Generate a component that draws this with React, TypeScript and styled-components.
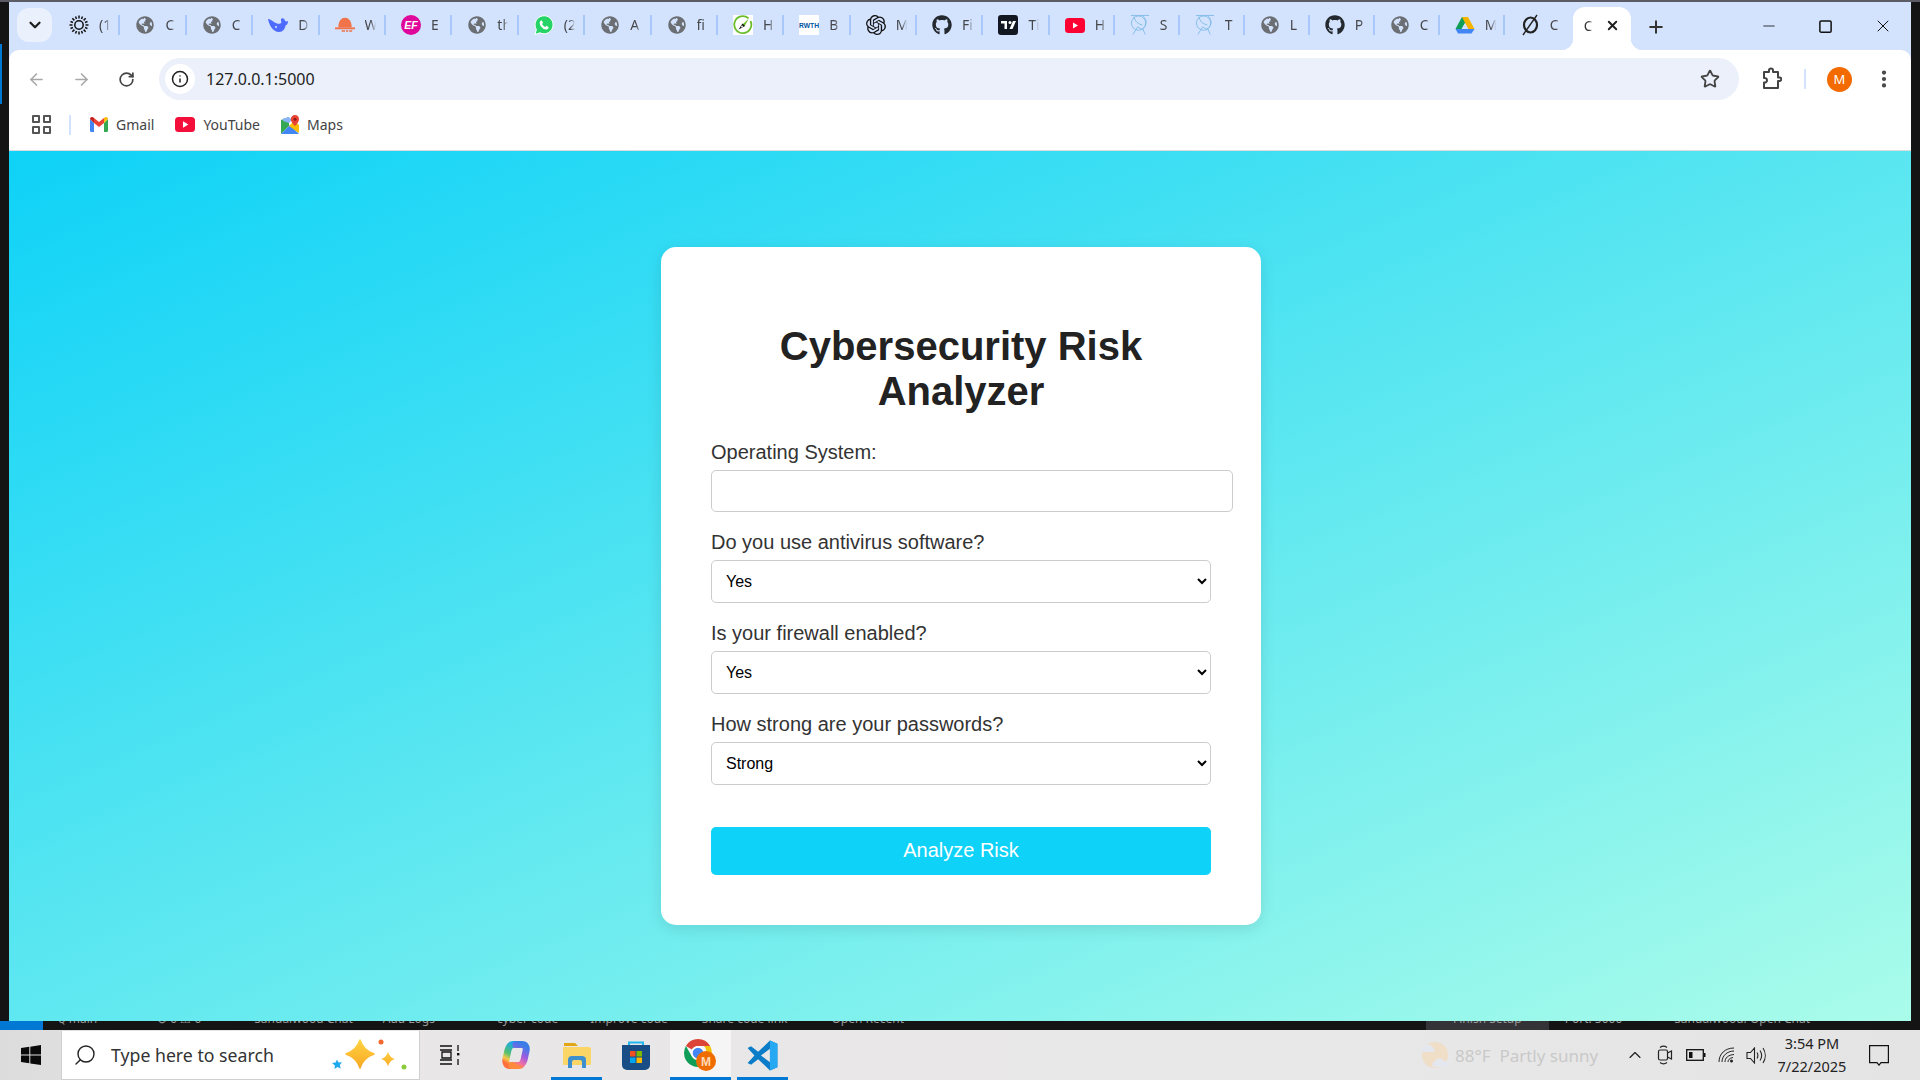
import React from "react";
import styled, { createGlobalStyle } from "styled-components";
import { ArrowLeft, ArrowRight, RotateCw, Info, Star, X, Plus, Minus, Square, EllipsisVertical, ChevronDown, ChevronUp, Search } from "lucide-react";
import { FaGlobeAmericas, FaGithub } from "react-icons/fa";
import { SiOpenai } from "react-icons/si";

const GlobalStyle = createGlobalStyle`
  html, body { margin: 0; padding: 0; width: 1920px; height: 1080px; overflow: hidden; background: #141414; }
  * { box-sizing: border-box; }
`;

const UI_FONT = `"Noto Sans", "Open Sans", sans-serif`;
const FORM_FONT = `"Liberation Sans", Arial, sans-serif`;

const Screen = styled.div`
  position: relative; width: 1920px; height: 1080px; display: flex; flex-direction: column; background: #141414; overflow: hidden;
  &::before { content: ""; position: absolute; left: 0; top: 44px; width: 2px; height: 60px; background: #0078d4; }
`;
const TopEdge = styled.div`height: 2px; background: #5c5c66; flex: none;`;
const ChromeWindow = styled.div`
  flex: 1; min-height: 0; margin: 0 9px; display: flex; flex-direction: column; background: #d3e3fd;
  font-family: ${UI_FONT};
`;
const TabStrip = styled.div`height: 48px; flex: none; display: flex; align-items: flex-start; padding-left: 8px;`;
const TabSearch = styled.div`
  width: 35px; height: 34px; margin-top: 6px; margin-right: 2px; border-radius: 12px; background: #ebf1fc;
  display: flex; align-items: center; justify-content: center; color: #1f1f1f;
`;
const Tab = styled.div<{ $w: number; $last?: boolean }>`
  width: ${(p) => p.$w}px; height: 20px; margin-top: 13px; padding-left: 15px; display: flex; align-items: center; gap: 10px; flex: none;
  border-right: 2px solid ${(p) => (p.$last ? "transparent" : "#a8c7fa")};
`;
const TabIconSlot = styled.span`width: 20px; height: 20px; display: flex; align-items: center; justify-content: center; flex: none;`;
const TabLabel = styled.span`
  width: 11px; overflow: hidden; white-space: nowrap; font-size: 14px; line-height: 20px; color: #45474a;
  -webkit-mask-image: linear-gradient(90deg, #000 55%, transparent);
  mask-image: linear-gradient(90deg, #000 55%, transparent);
`;
const ActiveTab = styled.div`
  position: relative; width: 58px; height: 43px; margin: 5px 0 0 3px; padding: 0 0 6px 11px; flex: none; display: flex; align-items: center; gap: 12px;
  background: #fff; border-radius: 12px 12px 0 0; color: #1f1f1f;
  &::before, &::after { content: ""; position: absolute; bottom: 0; width: 12px; height: 12px; }
  &::before { left: -12px; background: radial-gradient(circle at 0 0, transparent 12px, #fff 12.5px); }
  &::after { right: -12px; background: radial-gradient(circle at 100% 0, transparent 12px, #fff 12.5px); }
`;
const ActiveLabel = styled(TabLabel)`width: 9px; color: #333;`;
const NewTab = styled.div`width: 22px; height: 22px; margin: 14px 0 0 14px; color: #333; display: flex; align-items: center; justify-content: center;`;
const WindowControls = styled.div`margin-left: auto; display: flex;`;
const WindowButton = styled.div`width: 57px; height: 48px; display: flex; align-items: center; justify-content: center; color: #111;`;

const Toolbar = styled.div`
  height: 58px; flex: none; padding: 8px 7px 8px 5px; display: flex; align-items: stretch; background: #fff; border-radius: 10px 10px 0 0;
`;
const NavButton = styled.div<{ $w?: number; $color?: string }>`
  width: ${(p) => p.$w ?? 45}px; flex: none; display: flex; align-items: center; justify-content: center; color: ${(p) => p.$color ?? "#444"};
`;
const AddressBar = styled.div`
  flex: 1; margin: 0 11px 0 10px; padding: 0 19px 0 6px; border-radius: 21px; background: #ebf0fa; display: flex; align-items: center;
`;
const InfoChip = styled.div`width: 30px; height: 30px; border-radius: 50%; background: #fff; display: flex; align-items: center; justify-content: center; color: #222;`;
const Url = styled.span`margin-left: 11px; font-size: 16px; color: #1f1f1f;`;
const StarWrap = styled.div`margin-left: auto; display: flex; color: #444;`;
const ToolSep = styled.div`width: 2px; height: 20px; margin: 11px 10px; background: #d3e3fd;`;
const Avatar = styled.div`
  width: 25px; height: 25px; border-radius: 50%; background: #f26a00; color: #fff; font-size: 13px;
  display: flex; align-items: center; justify-content: center;
`;

const BookmarkBar = styled.div`
  height: 43px; flex: none; padding: 0 0 9px 23px; display: flex; align-items: center; gap: 21px; background: #fff; border-bottom: 1px solid #dadce0;
`;
const AppsIcon = styled.div`width: 19px; height: 19px; display: grid; grid-template-columns: 1fr 1fr; gap: 3px;`;
const AppsCell = styled.span`border: 2px solid #555; border-radius: 1px;`;
const BookmarkSep = styled.div`width: 2px; height: 20px; margin: 0 -2px 0 -3px; background: #d3e3fd;`;
const Bookmark = styled.div`display: flex; align-items: center; gap: 8px; font-size: 14px; color: #444;`;

const Page = styled.main`
  flex: 1; min-height: 0; padding-left: 2px; display: flex; align-items: center; justify-content: center;
  background: linear-gradient(157deg, #0ed2f7, #aafcea);
`;
const Card = styled.form`
  width: 600px; height: 678px; padding: 50px; background: #fff; border-radius: 15px; box-shadow: 0 4px 15px rgba(0, 0, 0, 0.1);
  font-family: ${FORM_FONT}; overflow: visible;
`;
const Title = styled.h1`
  margin: 27px 0 28px; text-align: center; font-size: 40px; line-height: 45px; font-weight: 700; color: #222;
`;
const FieldLabel = styled.label`display: block; margin-bottom: 7px; font-size: 20px; line-height: 21px; color: #333;`;
const TextInput = styled.input`
  display: block; width: 522px; height: 42px; margin-bottom: 20px; padding: 10px; border: 1px solid #ccc; border-radius: 5px; background: #fff; outline: none;
`;
const Select = styled.select`
  display: block; width: 500px; height: 43px; margin-bottom: 20px; padding: 10px; border: 1px solid #ccc; border-radius: 5px; background: #fff;
  font-family: ${FORM_FONT}; font-size: 16px; color: #000;
`;
const Submit = styled.button`
  display: block; width: 500px; height: 48px; margin-top: 42px; padding: 0 0 2px; border: 0; border-radius: 5px; background: #0ed2f7; color: #fff;
  font-family: ${FORM_FONT}; font-size: 20px;
`;

const StatusBar = styled.div`
  height: 9px; flex: none; display: flex; overflow: hidden; background: #141414; font-family: ${UI_FONT}; font-size: 12px; line-height: 20px; color: #9a9a9a;
`;
const StatusRemote = styled.div`width: 43px; background: #0078d4; flex: none;`;
const StatusItem = styled.span<{ $ml: number; $bg?: string; $pad?: number }>`
  margin: -12px 0 0 ${(p) => p.$ml}px; height: 30px; white-space: nowrap; flex: none;
  padding: 0 ${(p) => p.$pad ?? 0}px; background: ${(p) => p.$bg ?? "transparent"};
`;

const Taskbar = styled.footer`
  height: 50px; flex: none; display: flex; background: linear-gradient(90deg, #dcdcdc, #e8e6e7 12%, #e9e8e8 70%, #e4e4e4); font-family: ${UI_FONT};
`;
const StartButton = styled.div`width: 61px; display: flex; align-items: center; justify-content: center;`;
const SearchBox = styled.div`
  width: 359px; margin-top: 1px; background: #fff; border: 1px solid #d0d0d0; border-top: 0; padding: 0 11px 0 11px; display: flex; align-items: center; color: #222; font-size: 17.7px;
`;
const SearchText = styled.span`margin-left: 14px; color: #333;`;
const SparkleWrap = styled.span`margin-left: auto; display: flex;`;
const TaskSlot = styled.div<{ $w: number; $running?: boolean; $active?: boolean; $ml?: number }>`
  width: ${(p) => p.$w}px; margin-left: ${(p) => p.$ml ?? 0}px; flex: none; display: flex; align-items: center; justify-content: center;
  background: ${(p) => (p.$active ? "#f5f5f5" : "transparent")};
  border-bottom: 3px solid ${(p) => (p.$running ? "#0078d4" : "transparent")};
  border-top: 3px solid transparent;
`;
const Tray = styled.div`
  margin-left: auto; width: 505px; display: grid; grid-template-columns: 37px 168px 30px 30px 32px 28px 32px 80px 53px 15px; align-items: center; justify-items: center;
  color: #222;
`;
const Weather = styled.span`justify-self: start; padding-left: 3px; font-size: 17px; color: #c9c9c9; white-space: pre;`;
const Clock = styled.div`text-align: center; font-size: 14.5px; line-height: 23px; color: #222; white-space: nowrap;`;

const Globe = () => <FaGlobeAmericas size={18} color="#6b6e72" />;
const Gear = () => (
  <svg width="20" height="20" viewBox="0 0 20 20" fill="none" stroke="#111" strokeWidth="1.500">
    <circle cx="10" cy="10" r="4.200" />
    <path d="M10 .5v3M10 16.500v3M.5 10h3M16.500 10h3M3.300 3.300l2.100 2.100M14.600 14.600l2.100 2.100M16.700 3.300l-2.100 2.100M5.400 14.600l-2.100 2.100M6.500 1.500l1 2.500M12.500 16l1 2.500M13.500 1.500l-1 2.500M7.500 16l-1 2.500M1.500 6.500l2.500 1M16 12.500l2.500 1M18.500 6.500l-2.500 1M4 12.500l-2.500 1" />
  </svg>
);
const Whale = () => (
  <svg width="20" height="18" viewBox="0 0 20 18" fill="#4d6bfe">
    <path d="M0 3C1 9 5 16 11 16c4 0 6-3 6.500-6.500C19 9 20 7.500 20 5c-1 .5-2 .5-3 0 0-2-2-3-3.500-2.500C12.500 3 13 5 13.500 6.500 12 8.500 9 8 6 6 4 4.500 2 3 0 3z" />
    <circle cx="8" cy="11" r="1" fill="#d3e3fd" />
  </svg>
);
const Bell = () => (
  <svg width="21" height="20" viewBox="0 0 21 20">
    <path d="M3.500 12.500C3.500 6 6.500 2.500 10.500 2.500s7 3.500 7 10z" fill="#f0734a" />
    <path d="M0 12.500h21v2H0z" fill="#f0734a" />
    <path d="M7 15.500h3.500v1.500H7zM11.500 15.500h2.500v1.500h-2.500zM15 15.500h3v1.500h-3z" fill="#f0734a" />
  </svg>
);
const EF = () => (
  <svg width="20" height="20" viewBox="0 0 20 20">
    <circle cx="10" cy="10" r="10" fill="#e0089a" />
    <text x="10" y="13.800" textAnchor="middle" fontFamily="Liberation Sans" fontWeight="700" fontStyle="italic" fontSize="10.500" fill="#fff">EF</text>
  </svg>
);
const Whatsapp = () => (
  <svg width="20" height="20" viewBox="0 0 20 20">
    <path d="M1 19.500l1.400-5A9 9 0 1 1 6 17.800z" fill="#25d366" stroke="#fff" strokeWidth="1" />
    <path d="M7.200 5.500c-.6 0-1.500 1-1.500 2.400 0 2.800 3.300 6.400 6.400 6.600 1.400 0 2.400-1 2.400-1.800v-.8l-2.200-1.100-1 1.100c-1.400-.5-2.500-1.600-3.200-3l.9-1L8 5.700c-.2-.2-.5-.2-.8-.2z" fill="#fff" />
  </svg>
);
const Compass = () => (
  <svg width="20" height="20" viewBox="0 0 20 20">
    <rect width="20" height="20" fill="#fff" />
    <path d="M15.500 3.300A8.500 8.500 0 1 0 17.500 6" fill="none" stroke="#6cbe2c" strokeWidth="1.800" />
    <path d="M15.800 3.500L9.500 9.500l2 2z" fill="#6cbe2c" />
    <path d="M9.500 8.500l2.500 2.500-6.500 3.500z" fill="#111" />
    <circle cx="9" cy="11.500" r="0.900" fill="#fff" />
  </svg>
);
const Rwth = () => (
  <svg width="20" height="20" viewBox="0 0 20 20">
    <rect width="20" height="20" fill="#fff" />
    <text x="10" y="12.500" textAnchor="middle" fontFamily="Liberation Sans" fontWeight="700" fontSize="6.800" fill="#00549f" textLength="20" lengthAdjust="spacingAndGlyphs">RWTH</text>
  </svg>
);
const TradingView = () => (
  <svg width="20" height="20" viewBox="0 0 20 20">
    <rect width="20" height="20" rx="3" fill="#131722" />
    <path d="M3 6h6v8H6.500V8.500H3zM15 6h3l-3.500 8h-3z" fill="#fff" />
    <circle cx="12" cy="7.500" r="1.500" fill="#fff" />
  </svg>
);
const YtTab = () => (
  <svg width="20" height="15" viewBox="0 0 20 15">
    <rect width="20" height="15" rx="3.500" fill="#ff0033" />
    <path d="M8 4.500l5 3-5 3z" fill="#fff" />
  </svg>
);
const Sketch = () => (
  <svg width="21" height="22" viewBox="0 0 21 22" fill="none" stroke="#7cb9e8" strokeWidth="0.900">
    <circle cx="9" cy="9" r="7.500" />
    <path d="M1 1h19M13 1c5 4 5 10 1 13M3 21l5-8 5 3M16 21l-3-7M4 2c1 5 4 8 9 9" />
  </svg>
);
const Drive = () => (
  <svg width="20" height="20" viewBox="0 0 20 20">
    <path d="M7 2h6l-3.200 6.300L6.600 14H.5l3.200-6z" fill="#0f9d58" />
    <path d="M7 2h6l6.500 12h-6.300z" fill="#f4b400" />
    <path d="M.5 14h19l-3 4.500h-13.500z" fill="#4285f4" />
    <path d="M6.800 14L10 8.300 13.200 14z" fill="#d3e3fd" />
  </svg>
);
const Slash = () => (
  <svg width="20" height="22" viewBox="0 0 20 22" fill="none" stroke="#222" strokeWidth="2.200">
    <ellipse cx="10.500" cy="11" rx="6.500" ry="7.500" />
    <path d="M17 1L3 21" strokeWidth="1.400" />
  </svg>
);

const tabs: { icon: React.ReactNode; label: string }[] = [
  { icon: <Gear />, label: "(1" },
  { icon: <Globe />, label: "C" },
  { icon: <Globe />, label: "C" },
  { icon: <Whale />, label: "D" },
  { icon: <Bell />, label: "W" },
  { icon: <EF />, label: "E" },
  { icon: <Globe />, label: "th" },
  { icon: <Whatsapp />, label: "(2" },
  { icon: <Globe />, label: "A" },
  { icon: <Globe />, label: "fi" },
  { icon: <Compass />, label: "H" },
  { icon: <Rwth />, label: "B" },
  { icon: <SiOpenai size={20} color="#111" />, label: "M" },
  { icon: <FaGithub size={20} color="#24292f" />, label: "Fi" },
  { icon: <TradingView />, label: "Ti" },
  { icon: <YtTab />, label: "H" },
  { icon: <Sketch />, label: "S" },
  { icon: <Sketch />, label: "T" },
  { icon: <Globe />, label: "L" },
  { icon: <FaGithub size={20} color="#24292f" />, label: "P" },
  { icon: <Globe />, label: "C" },
  { icon: <Drive />, label: "M" },
  { icon: <Slash />, label: "C" },
];

const Puzzle = () => (
  <svg width="20" height="24" viewBox="0 0 20 24" fill="none" stroke="#444" strokeWidth="2" strokeLinejoin="round">
    <path d="M2 5h5V3.500a2 2 0 0 1 4 0V5h5v5.500h1.500a1.800 1.800 0 0 1 0 3.600H16V21H2v-5.500c2 .3 3-1 3-2.300S4 10.500 2 11z" />
  </svg>
);
const Gmail = () => (
  <svg width="18" height="15" viewBox="0 0 18 15">
    <path d="M0 2v11.500A1.500 1.500 0 0 0 1.500 15H4V6z" fill="#4285f4" />
    <path d="M14 6v9h2.500a1.500 1.500 0 0 0 1.500-1.500V2z" fill="#34a853" />
    <path d="M4 6V1l5 4 5-4v5L9 10z" fill="#ea4335" />
    <path d="M0 2c0-1.700 2-2.500 3-1.700L4 1v5L0 2z" fill="#c5221f" />
    <path d="M14 1l1-.7C16 -.5 18 .3 18 2l-4 4z" fill="#fbbc04" />
  </svg>
);
const YtBookmark = () => (
  <svg width="20" height="15" viewBox="0 0 20 15">
    <rect width="20" height="15" rx="3.500" fill="#f40f3b" />
    <path d="M8 4.300l5.300 3.200L8 10.700z" fill="#fff" />
  </svg>
);
const Maps = () => (
  <svg width="18" height="20" viewBox="0 0 18 20">
    <path d="M0 5l8-3v9l-8 8z" fill="#34a853" />
    <path d="M0 19l9-9 9 9z" fill="#4285f4" />
    <path d="M2 3.500L8 2l3 3-3 3-6-2z" fill="#8ab4f8" />
    <path d="M8 11l5-5 5 4v8z" fill="#fbbc04" />
    <path d="M14 0a4.200 4.200 0 0 0-4.200 4.200C9.800 7 14 11 14 11s4-4 4-6.800A4.200 4.200 0 0 0 14 0z" fill="#ea4335" />
    <circle cx="14" cy="4.300" r="1.500" fill="#8e1c12" />
  </svg>
);
const WindowsLogo = () => (
  <svg width="20" height="20" viewBox="0 0 20 20" fill="#0a0a0a">
    <path d="M0 3l8.300-1.200v7.800H0zM9.300 1.700L20 0v9.600H9.300zM0 10.600h8.300v7.700L0 17zM9.300 10.600H20V20L9.300 18.400z" />
  </svg>
);
const Sparkles = () => (
  <svg width="80" height="36" viewBox="0 0 80 36">
    <defs>
      <linearGradient id="spark" x1="0" y1="0" x2="0" y2="1">
        <stop offset="0" stopColor="#ffd23f" />
        <stop offset="1" stopColor="#f9a825" />
      </linearGradient>
    </defs>
    <path d="M32 3c2 6 5 11 14 14-9 3-12 8-14 14-2-6-5-11-14-14 9-3 12-8 14-14z" fill="url(#spark)" strokeLinejoin="round" stroke="url(#spark)" strokeWidth="1.500" />
    <path d="M60 14.500c1 3.500 2.500 6 7 7.500-4.500 1.500-6 4-7 7.500-1-3.500-2.500-6-7-7.500 4.500-1.500 6-4 7-7.500z" fill="url(#spark)" />
    <path d="M9 22.500l1.500 3 3.500-.2-2.200 2.700.9 3.500-3.200-1.500-3 2 .4-3.600-2.900-2.300 3.600-.7z" fill="#1fa9ee" />
    <circle cx="53" cy="5" r="2.500" fill="#f2672e" />
    <circle cx="76" cy="30" r="2.500" fill="#8ccb3e" />
  </svg>
);
const TaskView = () => (
  <svg width="20" height="20" viewBox="0 0 20 20" fill="none" stroke="#111" strokeWidth="1.300">
    <path d="M0 1h12M0 5h12M0 15h12M0 19h12M2 7h9v6H2zM18 0v6M18 14v6" />
    <rect x="17" y="8" width="2.400" height="2.400" fill="#111" stroke="none" />
  </svg>
);
const Copilot = () => (
  <svg width="30" height="30" viewBox="0 0 30 30" fill="none" strokeWidth="7" strokeLinecap="round">
    <defs>
      <linearGradient id="co1" x1="0.700" y1="0" x2="0.300" y2="1">
        <stop offset="0" stopColor="#1aa7ec" />
        <stop offset="0.550" stopColor="#52c06f" />
        <stop offset="0.800" stopColor="#f7c948" />
        <stop offset="1" stopColor="#ff6f3c" />
      </linearGradient>
      <linearGradient id="co2" x1="0.700" y1="0" x2="0.300" y2="1">
        <stop offset="0" stopColor="#3b7de8" />
        <stop offset="0.450" stopColor="#9a5be0" />
        <stop offset="0.800" stopColor="#ef6fa8" />
        <stop offset="1" stopColor="#ff8a3c" />
      </linearGradient>
    </defs>
    <path d="M19 4.500h-7C9 4.500 8 7 7 10L5 19c-1 4 1 6.500 4 6.500h6" stroke="url(#co1)" />
    <path d="M11 25.500h7c3 0 4-2.500 5-5.500l2-9c1-4-1-6.500-4-6.500h-6" stroke="url(#co2)" />
  </svg>
);
const Folder = () => (
  <svg width="28" height="26" viewBox="0 0 28 26">
    <path d="M1 1h11l3 3H1z" fill="#e2a514" />
    <path d="M0 5h26a2 2 0 0 1 2 2v15a1 1 0 0 1-1 1H1a1 1 0 0 1-1-1z" fill="#fbd667" />
    <path d="M5 26v-8a4 4 0 0 1 4-4h10a4 4 0 0 1 4 4v8h-4v-6a2 2 0 0 0-2-2h-6a2 2 0 0 0-2 2v6z" fill="#3d8fce" />
  </svg>
);
const Store = () => (
  <svg width="30" height="30" viewBox="0 0 30 30">
    <path d="M8 6V2.500h14V6" fill="none" stroke="#20b7f0" strokeWidth="2" />
    <path d="M1 5h28v20a5 5 0 0 1-5 5H6a5 5 0 0 1-5-5z" fill="#184d85" />
    <rect x="9" y="11" width="5.500" height="5.500" fill="#f25022" />
    <rect x="15.500" y="11" width="5.500" height="5.500" fill="#7fba00" />
    <rect x="9" y="17.500" width="5.500" height="5.500" fill="#00a4ef" />
    <rect x="15.500" y="17.500" width="5.500" height="5.500" fill="#ffb900" />
  </svg>
);
const ChromeApp = () => (
  <svg width="33" height="32" viewBox="0 0 33 32">
    <path d="M14 0a14 14 0 0 1 12.100 7H14a7 7 0 0 0-6.100 3.500L1.900 7A14 14 0 0 1 14 0z" fill="#db4437" />
    <path d="M26.100 7A14 14 0 0 1 14 28l6-10.500A7 7 0 0 0 20 7z" fill="#f4c20d" />
    <path d="M1.900 7l6 10.500a7 7 0 0 0 6.100 3.500L14 28h-.2A14 14 0 0 1 1.900 7z" fill="#0f9d58" />
    <circle cx="14" cy="14" r="6.800" fill="#fff" />
    <circle cx="14" cy="14" r="5.300" fill="#4285f4" />
    <circle cx="22" cy="22" r="10" fill="#ef6c00" />
    <text x="22" y="26.500" textAnchor="middle" fontFamily="Liberation Sans" fontWeight="700" fontSize="12" fill="#ffd9b8">M</text>
  </svg>
);
const VsCode = () => (
  <svg width="31" height="31" viewBox="0 0 100 100">
    <path fillRule="evenodd" d="M74 2L36 38 13 20 2 26l22 24L2 74l11 6 23-18 38 36 24-10V12zM74 28L45 50l29 22z" fill="#0a7cc8" />
    <path d="M74 2l24 10v76L74 98z" fill="#27a8f3" />
  </svg>
);
const WeatherIcon = () => (
  <svg width="30" height="28" viewBox="0 0 30 28">
    <circle cx="16" cy="14" r="13" fill="#f8d6a8" opacity="0.5" />
    <path d="M2 11a4 4 0 0 1 3-5 5 5 0 0 1 9 1 3 3 0 0 1 1 4z" fill="#e4e8ee" />
    <path d="M14 26a4 4 0 0 1 2-6 5 5 0 0 1 9 0 3.500 3.500 0 0 1 3 6z" fill="#e4e8ee" />
  </svg>
);
const MeetIcon = () => (
  <svg width="16" height="20" viewBox="0 0 16 20" fill="none" stroke="#222" strokeWidth="1.200">
    <rect x="1.500" y="5" width="9" height="10" rx="1.500" />
    <path d="M10.500 8l4-2v8l-4-2M3 2.500c2-1.500 5-1.500 7 0M3 17.500c2 1.500 5 1.500 7 0" />
  </svg>
);
const Battery = () => (
  <svg width="20" height="12" viewBox="0 0 20 12">
    <rect x="0.700" y="0.700" width="16.600" height="10.600" fill="none" stroke="#111" strokeWidth="1.300" />
    <rect x="3" y="3" width="3.500" height="6" fill="#111" />
    <rect x="18" y="4" width="1.500" height="4" fill="#111" />
  </svg>
);
const Wifi = () => (
  <svg width="17" height="16" viewBox="0 0 17 16" fill="none" stroke="#222" strokeWidth="1">
    <path d="M1 15C1 7 7 1 16 1M4 15C4 9 9 4 16 4M7 15c0-4 3-7 9-7.500M10 15c0-2 1.500-4 5-4.500" />
    <circle cx="13.500" cy="14" r="1.500" fill="#222" stroke="none" />
  </svg>
);
const Speaker = () => (
  <svg width="20" height="17" viewBox="0 0 20 17" fill="none" stroke="#222" strokeWidth="1.100">
    <path d="M1 5.500h3.500L8.500 1v15l-4-4.500H1zM11 5.500c1.200 2 1.200 4 0 6M14 3.500c2 3 2 7 0 10M17 1c3 4.500 3 10.500 0 15" />
  </svg>
);
const Notification = () => (
  <svg width="20" height="21" viewBox="0 0 20 21" fill="none" stroke="#111" strokeWidth="1.200">
    <path d="M.6.600h18.800v17H12l-2 2.500-2-2.500H.6z" />
  </svg>
);

export default function App() {
  return (
    <Screen>
      <GlobalStyle />
      <TopEdge />
      <ChromeWindow>
        <TabStrip>
          <TabSearch><ChevronDown size={18} strokeWidth={3} /></TabSearch>
          {tabs.map((t, i) => (
            <Tab key={i} $w={i < 15 ? 66.4 : 65} $last={i === tabs.length - 1}>
              <TabIconSlot>{t.icon}</TabIconSlot>
              <TabLabel>{t.label}</TabLabel>
            </Tab>
          ))}
          <ActiveTab>
            <ActiveLabel>C</ActiveLabel>
            <X size={15} strokeWidth={3} />
          </ActiveTab>
          <NewTab><Plus size={20} strokeWidth={2.4} /></NewTab>
          <WindowControls>
            <WindowButton><Minus size={18} strokeWidth={1.1} /></WindowButton>
            <WindowButton><Square size={15} strokeWidth={1.5} absoluteStrokeWidth /></WindowButton>
            <WindowButton><X size={20} strokeWidth={1.2} /></WindowButton>
          </WindowControls>
        </TabStrip>
        <Toolbar>
          <NavButton $color="#a8a8a8"><ArrowLeft size={19} strokeWidth={2} /></NavButton>
          <NavButton $color="#a8a8a8"><ArrowRight size={19} strokeWidth={2} /></NavButton>
          <NavButton><RotateCw size={17} strokeWidth={2.4} /></NavButton>
          <AddressBar>
            <InfoChip><Info size={18} strokeWidth={2} /></InfoChip>
            <Url>127.0.0.1:5000</Url>
            <StarWrap><Star size={20} strokeWidth={2.2} /></StarWrap>
          </AddressBar>
          <NavButton $w={44}><Puzzle /></NavButton>
          <ToolSep />
          <NavButton $w={47}><Avatar>M</Avatar></NavButton>
          <NavButton $w={41}><EllipsisVertical size={22} strokeWidth={2.6} /></NavButton>
        </Toolbar>
        <BookmarkBar>
          <AppsIcon><AppsCell /><AppsCell /><AppsCell /><AppsCell /></AppsIcon>
          <BookmarkSep />
          <Bookmark><Gmail />Gmail</Bookmark>
          <Bookmark><YtBookmark />YouTube</Bookmark>
          <Bookmark><Maps />Maps</Bookmark>
        </BookmarkBar>
        <Page>
          <Card>
            <Title>Cybersecurity Risk Analyzer</Title>
            <FieldLabel htmlFor="os">Operating System:</FieldLabel>
            <TextInput id="os" type="text" />
            <FieldLabel htmlFor="av">Do you use antivirus software?</FieldLabel>
            <Select id="av" defaultValue="Yes"><option>Yes</option><option>No</option></Select>
            <FieldLabel htmlFor="fw">Is your firewall enabled?</FieldLabel>
            <Select id="fw" defaultValue="Yes"><option>Yes</option><option>No</option></Select>
            <FieldLabel htmlFor="pw">How strong are your passwords?</FieldLabel>
            <Select id="pw" defaultValue="Strong"><option>Strong</option><option>Medium</option><option>Weak</option></Select>
            <Submit type="button">Analyze Risk</Submit>
          </Card>
        </Page>
      </ChromeWindow>
      <StatusBar>
        <StatusRemote />
        <StatusItem $ml={15}>ꞯ main</StatusItem>
        <StatusItem $ml={60}>⊗ 0 ⚠ 0</StatusItem>
        <StatusItem $ml={53}>Sandalwood Chat</StatusItem>
        <StatusItem $ml={30}>Add Logs</StatusItem>
        <StatusItem $ml={62}>cyber code</StatusItem>
        <StatusItem $ml={32}>Improve code</StatusItem>
        <StatusItem $ml={34}>Share code link</StatusItem>
        <StatusItem $ml={44}>Open Recent</StatusItem>
        <StatusItem $ml={522} $bg="#333338" $pad={27}>Finish Setup</StatusItem>
        <StatusItem $ml={16}>Port: 5000</StatusItem>
        <StatusItem $ml={52}>Sandalwood: Open Chat</StatusItem>
      </StatusBar>
      <Taskbar>
        <StartButton><WindowsLogo /></StartButton>
        <SearchBox>
          <Search size={24} strokeWidth={1.4} style={{ transform: "scaleX(-1)" }} />
          <SearchText>Type here to search</SearchText>
          <SparkleWrap><Sparkles /></SparkleWrap>
        </SearchBox>
        <TaskSlot $w={60}><TaskView /></TaskSlot>
        <TaskSlot $w={71}><Copilot /></TaskSlot>
        <TaskSlot $w={51} $running><Folder /></TaskSlot>
        <TaskSlot $w={68}><Store /></TaskSlot>
        <TaskSlot $w={61} $running $active><ChromeApp /></TaskSlot>
        <TaskSlot $w={51} $ml={6} $running><VsCode /></TaskSlot>
        <Tray>
          <WeatherIcon />
          <Weather>88°F  Partly sunny</Weather>
          <ChevronUp size={20} strokeWidth={1.4} />
          <MeetIcon />
          <Battery />
          <Wifi />
          <Speaker />
          <Clock>3:54 PM<br />7/22/2025</Clock>
          <Notification />
        </Tray>
      </Taskbar>
    </Screen>
  );
}
